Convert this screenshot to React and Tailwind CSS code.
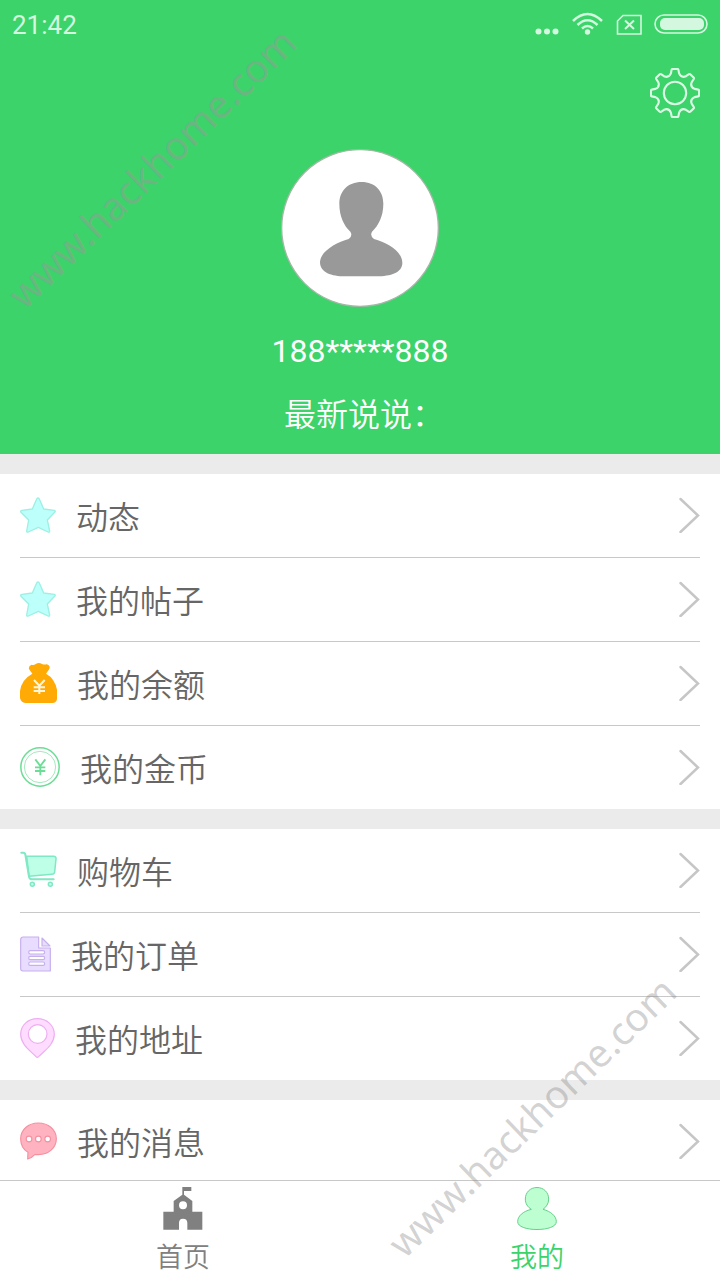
import clsx from "clsx";

// Ayar simgesi: 8 dişli çark
const gearPath = (() => {
  const rot = (x, y, a) => {
    const c = Math.cos(a);
    const s = Math.sin(a);
    return `${(25 + x * c - y * s).toFixed(2)} ${(25 + x * s + y * c).toFixed(2)}`;
  };
  let d = "";
  for (let i = 0; i < 8; i++) {
    const a = (i * Math.PI) / 4;
    d += `${i === 0 ? "M" : "L"}${rot(-4.1, -19.6, a)} L${rot(-3.4, -23.2, a)} Q${rot(-3.2, -24.1, a)} ${rot(-2.2, -24.1, a)}`;
    d += ` L${rot(2.2, -24.1, a)} Q${rot(3.2, -24.1, a)} ${rot(3.4, -23.2, a)} L${rot(4.1, -19.6, a)}`;
    d += ` Q${rot(6.1, -14.8, a)} ${rot(-4.1, -19.6, a + Math.PI / 4)} `;
  }
  return d + "Z";
})();

function GearIcon() {
  return (
    <svg className="w-[50px] h-[50px]" viewBox="0 0 50 50" fill="none" stroke="#dcf9e5" strokeWidth="2.1" strokeLinejoin="round">
      <path d={gearPath} />
      <circle cx="25" cy="25" r="11.2" />
    </svg>
  );
}

function StarIcon() {
  return (
    <svg className="w-9 h-9" viewBox="0 0 108 108" fill="#bdfffa" stroke="#9cf0e4" strokeWidth="4" strokeLinejoin="round">
      <path d="M54 3 Q57 3 59 8 L71 36 L103 40 Q108 42 104 46 L82 69 L89 102 Q89 107 84 105 L55 91 L25 105 Q20 107 20 102 L26 69 L3 46 Q0 41 6 40 L37 36 L49 8 Q51 3 54 3Z" />
    </svg>
  );
}

function BalanceIcon() {
  return (
    <svg className="w-[37px] h-10" viewBox="0 0 111 120" fill="#ffaa05">
      <path d="M37 32 L27 18 Q25 8 35 5 Q42 7 47 3 Q57 -3 66 3 Q72 6 80 4 Q92 7 88 18 L78 32 Q104 46 111 80 V108 Q109 120 97 120 H16 Q3 118 0 105 V84 Q4 50 37 32Z" />
      <path d="M42 51 L58 68 L74 51 M58 68 V93 M41 73 H75 M41 84 H75" fill="none" stroke="#fff6df" strokeWidth="6" />
    </svg>
  );
}

function CoinIcon() {
  return (
    <svg className="w-10 h-10" viewBox="0 0 120 120" fill="none" stroke="#6cdc96">
      <circle cx="60" cy="60" r="57.5" strokeWidth="4.5" />
      <circle cx="60" cy="60" r="47" strokeWidth="3" stroke="#a4e9be" />
      <path d="M46 37 L61 57 L76 37 M61 57 V85 M45 61 H76 M45 72 H76" strokeWidth="5.5" />
    </svg>
  );
}

function CartIcon() {
  return (
    <svg className="w-[37px] h-10" viewBox="0 0 111 120" fill="none" stroke="#7fe8c4" strokeWidth="4.5" strokeLinejoin="round" strokeLinecap="round">
      <path d="M20 19 H101 Q109 19 108 27 L104 66 Q103 73 96 73 L27 79Z" fill="#bdffe7" />
      <path d="M4 8 H10 Q15 8 16 14 L27 80 Q29 88 36 88 H101" strokeWidth="6" />
      <circle cx="37" cy="103" r="6" fill="#bdffe7" />
      <circle cx="91" cy="103" r="6" fill="#bdffe7" />
    </svg>
  );
}

function OrderIcon() {
  return (
    <svg className="w-[31px] h-9" viewBox="0 0 93 108" fill="#e8dcff" stroke="#c7b0ee" strokeWidth="3.5" strokeLinejoin="round">
      <path d="M9 3 H56 V36 H91 V105 H9 Q2 104 2 98 V10 Q3 3 9 3Z" />
      <path d="M66 6 L90 30 H66Z" />
      <g fill="#fff">
        <rect x="26" y="44" width="48" height="10" rx="5" />
        <rect x="26" y="61" width="48" height="10" rx="5" />
        <rect x="26" y="78" width="48" height="10" rx="5" />
      </g>
    </svg>
  );
}

function AddressIcon() {
  return (
    <svg className="w-[35px] h-10" viewBox="0 0 105 120" fill="#fddcff" stroke="#edaef0" strokeWidth="3.5">
      <path d="M52 2 C80 2 103 22 103 49 C103 80 72 99 56 116 Q52 120 48 116 C32 99 2 80 2 49 C2 22 24 2 52 2Z" />
      <circle cx="53" cy="48" r="28" fill="#fff" />
    </svg>
  );
}

function MessageIcon() {
  return (
    <svg className="w-[37px] h-[38px]" viewBox="0 0 111 114" fill="#ffb3c0" stroke="#f690a0" strokeWidth="3.5" strokeLinejoin="round">
      <path d="M55 3 C85 3 109 23 109 50 C109 78 85 98 55 98 Q49 98 45 97 Q36 107 23 111 L24 91 C9 82 2 67 2 50 C2 23 25 3 55 3Z" />
      <g fill="#fff">
        <circle cx="27" cy="51" r="8.5" />
        <circle cx="55" cy="51" r="8.5" />
        <circle cx="83" cy="51" r="8.5" />
      </g>
    </svg>
  );
}

function HomeIcon() {
  return (
    <svg className="w-10 h-[43px]" viewBox="0 0 120 129" fill="#808080">
      <path d="M58 0 H85 V12 H63 V23 L88 42 V74 H118 V128 H73 V108 Q73 95 60 95 Q48 95 48 108 V128 H1 V74 H32 V42 L58 23Z" />
      <circle cx="60" cy="55" r="12" fill="#fff" />
    </svg>
  );
}

function MineIcon() {
  return (
    <svg className="w-10 h-[43px]" viewBox="0 0 120 129" fill="#bdffd1" stroke="#67cf8c" strokeWidth="3">
      <path d="M60 1.5 C80 1.5 95 16 95 36 C95 50 88 60 78 67 C101 73 118 87 118 104 C118 119 92 127.500 60 127.500 C28 127.500 2 119 2 104 C2 87 18 73 43 67 C32 60 25 50 25 36 C25 16 40 1.500 60 1.500Z" />
    </svg>
  );
}

function Chevron() {
  return (
    <svg className="w-[21px] h-9 ml-auto" viewBox="0 0 21 36" fill="none" stroke="#c6c6c6" strokeWidth="2.5" strokeLinecap="round">
      <path d="M1.5 2 L19 18.500 L1.5 35" />
    </svg>
  );
}

const groups = [
  [
    { label: "动态", Icon: StarIcon },
    { label: "我的帖子", Icon: StarIcon },
    { label: "我的余额", Icon: BalanceIcon },
    { label: "我的金币", Icon: CoinIcon },
  ],
  [
    { label: "购物车", Icon: CartIcon },
    { label: "我的订单", Icon: OrderIcon },
    { label: "我的地址", Icon: AddressIcon },
  ],
  [{ label: "我的消息", Icon: MessageIcon }],
];

const tabs = [
  { label: "首页", Icon: HomeIcon, active: false },
  { label: "我的", Icon: MineIcon, active: true },
];

function StatusBar() {
  return (
    <div className="flex h-[50px] items-center justify-between pl-3 pr-3">
      <span className="font-['Roboto'] text-[26px] font-normal leading-none text-[#d4f7df]">21:42</span>
      <svg className="w-[174px] h-[50px]" viewBox="534 0 174 50" fill="none" stroke="#d4f7df" strokeWidth="1.6">
        <g fill="#d4f7df" stroke="none">
          <circle cx="538.5" cy="31.5" r="3" />
          <circle cx="547" cy="31.5" r="3" />
          <circle cx="555.5" cy="31.5" r="3" />
          <circle cx="587.5" cy="32" r="2.7" />
          <rect x="660" y="18" width="44" height="12" rx="5" />
        </g>
        <path d="M573 21 Q587.5 7 602 21 M577.5 25 Q587.5 15.5 597.5 25 M582 28.5 Q587.5 23.5 593 28.5" strokeWidth="2.5" />
        <path d="M623 15.5 H641 V34 H617.5 V21Z" />
        <path d="M625 20.5 L634 29 M634 20.5 L625 29" strokeWidth="2" />
        <rect x="655" y="15" width="52" height="18" rx="9" />
      </svg>
    </div>
  );
}

function Watermark({ className }) {
  return (
    <div
      className={clsx(
        "pointer-events-none absolute -translate-x-1/2 -translate-y-1/2 -rotate-[44deg] whitespace-nowrap font-['Noto_Sans'] text-[39px] font-normal leading-none",
        className
      )}
    >
      www.hackhome.com
    </div>
  );
}

export default function App() {
  return (
    <div className="relative flex h-[1280px] w-[720px] flex-col overflow-hidden bg-[#ebebeb] font-['Noto_Sans_CJK_SC',sans-serif] font-[350]">
      {/* Header */}
      <header className="flex h-[454px] shrink-0 flex-col bg-[#3cd36a]">
        <StatusBar />
        <div className="flex h-[99px] justify-end pr-5 pt-[18px]">
          <GearIcon />
        </div>
        <div className="flex flex-col items-center text-white">
          <svg className="w-[158px] h-[158px]" viewBox="63 26 474 474">
            <circle cx="300" cy="263" r="235" fill="#fff" stroke="#a3b8a5" strokeWidth="4" />
            <path
              d="M305 125 C346 125 370 153 370 190 C370 228 355 256 336 274 Q329 287 342 296 C382 307 427 333 427 368 C427 397 392 408 350 408 H255 C215 408 180 397 180 365 C182 332 228 307 266 296 Q279 287 271 274 C252 256 238 228 238 190 C238 153 263 125 305 125Z"
              fill="#999"
            />
          </svg>
          <div className="mt-6 h-10 font-['Roboto'] text-[32px] font-normal leading-10">188*****888</div>
          <div className="mt-[19px] pl-2 text-[32px] leading-[44px]">最新说说：</div>
        </div>
      </header>

      {/* Menu */}
      <main className="flex min-h-0 flex-1 flex-col gap-5 overflow-hidden pt-5">
        {groups.map((items, i) => (
          <section key={i} className="shrink-0 bg-white px-5">
            {items.map(({ label, Icon }) => (
              <div
                key={label}
                className="flex h-[84px] items-center gap-5 border-b border-[#c8c8c8] pb-0.5 last:h-[83px] last:border-b-0"
              >
                <Icon />
                <span className="text-[32px] leading-[44px] text-[#666]">{label}</span>
                <Chevron />
              </div>
            ))}
          </section>
        ))}
      </main>

      {/* Tab bar */}
      <nav className="grid h-[100px] shrink-0 grid-cols-2 border-t border-[#c8c8c8] bg-white px-1.5">
        {tabs.map(({ label, Icon, active }) => (
          <div
            key={label}
            className={clsx("flex flex-col items-center pt-1.5 text-[27px] leading-[40px]", active ? "text-[#3cd36a]" : "text-[#808080]")}
          >
            <Icon />
            <span className="mt-1.5">{label}</span>
          </div>
        ))}
      </nav>

      <Watermark className="left-[151px] top-[167px] text-[#999]/50" />
      <Watermark className="left-[531px] top-[1116px] text-[#808080]/35" />
    </div>
  );
}
